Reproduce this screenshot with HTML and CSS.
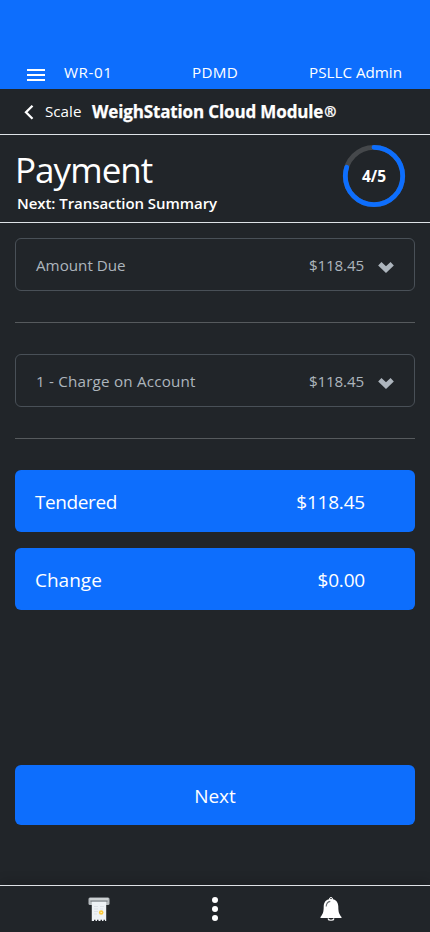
FILE: index.html
```html
<!DOCTYPE html>
<html lang="en">
<head>
<meta charset="utf-8">
<title>Payment</title>
<link rel="stylesheet" href="styles.css">
</head>
<body>
<div class="app">
  <header class="topbar">
    <svg class="menu" width="18" height="12" viewBox="0 0 18 12"><path d="M0 1h18M0 6h18M0 11h18" stroke="#fff" stroke-width="2"/></svg>
    <span class="station">WR-01</span>
    <span class="site">PDMD</span>
    <span class="user">PSLLC Admin</span>
  </header>
  <nav class="crumbs">
    <svg width="10" height="16" viewBox="0 0 10 16"><path d="M8.500 1.800L2 8.300l6.500 6.500" fill="none" stroke="#fff" stroke-width="2.300"/></svg>
    <span class="back">Scale</span>
    <strong class="product">WeighStation Cloud Module<span class="reg">®</span></strong>
  </nav>
  <section class="heading">
    <div>
      <h1>Payment</h1>
      <p class="next-step">Next: Transaction Summary</p>
    </div>
    <div class="progress">
      <svg width="64" height="64" viewBox="0 0 64 64">
        <circle cx="32" cy="32" r="28.700" fill="none" stroke="#45484b" stroke-width="4.800"/>
        <circle cx="32" cy="32" r="28.700" fill="none" stroke="#0d6efd" stroke-width="4.800" stroke-linecap="round" pathLength="100" stroke-dasharray="80 100" transform="rotate(-90 32 32)"/>
      </svg>
      <span class="step">4/5</span>
    </div>
  </section>
  <main>
    <div class="row">
      <span class="l-due">Amount Due</span><span class="amount">$118.45</span>
      <svg width="18" height="12" viewBox="0 0 18 12"><path d="M2.800 2.800L9 8.600l6.200-5.800" fill="none" stroke="#adb5bd" stroke-width="4.800"/></svg>
    </div>
    <hr>
    <div class="row">
      <span class="l-charge">1 - Charge on Account</span><span class="amount">$118.45</span>
      <svg width="18" height="12" viewBox="0 0 18 12"><path d="M2.800 2.800L9 8.600l6.200-5.800" fill="none" stroke="#adb5bd" stroke-width="4.800"/></svg>
    </div>
    <hr>
    <div class="total"><span class="l-tendered">Tendered</span><span class="sum">$118.45</span></div>
    <div class="total"><span>Change</span><span class="sum">$0.00</span></div>
    <button class="next">Next</button>
  </main>
  <footer>
    <svg width="22" height="24" viewBox="0 0 22 24">
      <rect x=".5" y=".5" width="21" height="7.500" rx="1.500" fill="#b5babd"/>
      <path d="M2 2h18" stroke="#e3e7e8"/>
      <path d="M2.500 4.200h17" stroke="#7b8185" stroke-width="1.200"/>
      <path d="M3.800 4.800h14.400V24H17v-1.200h-1.500V24H14v-1.200h-1.500V24h-2v-1.200H9V24H7.500v-1.200H6V24H3.800z" fill="#eef2f5"/>
      <path d="M6 9.500h4M12 9.500h4M6 12h4M12 12h3M6 14.500h4M6 17h3" stroke="#dce1e6"/>
      <circle cx="13.200" cy="15.500" r="2.300" fill="#fbc93d"/>
      <path d="M12.500 15.500h1.500" stroke="#fff0a8"/>
    </svg>
    <svg width="6" height="24" viewBox="0 0 6 24" fill="#fff"><circle cx="3" cy="3" r="3"/><circle cx="3" cy="12" r="3"/><circle cx="3" cy="21" r="3"/></svg>
    <svg width="22" height="24" viewBox="0 0 22 24">
      <circle cx="11" cy="2" r="1.500" fill="none" stroke="#fff"/>
      <path d="M11 2c-4.600 0-7.300 3-7.300 7.500 0 5.500-.7 7.500-3.200 10.500v1h21v-1c-2.500-3-3.200-5-3.200-10.500C18.300 5 15.600 2 11 2z" fill="#fff"/>
      <path d="M6.200 9.500c.1-2.900 1.500-4.700 4.100-5.100" fill="none" stroke="#6b7074" stroke-width="1.100"/>
      <path d="M8 21.500c.5 2.300 5.500 2.300 6 0" fill="none" stroke="#fff" stroke-width="1.200"/>
    </svg>
  </footer>
</div>
</body>
</html>
```
FILE: styles.css
```css
* { box-sizing: border-box; }
body {
  margin: 0;
  background: #212529;
  color: #fff;
  font: 15.2px/24px "Open Sans", "Noto Sans", sans-serif;
}
.app { height: 932px; display: flex; flex-direction: column; overflow: hidden; }
svg { display: block; flex: none; }
span, h1, p { white-space: nowrap; }

.topbar {
  height: 89px;
  padding: 0 28px 5px 27px;
  background: #0d6efd;
  display: grid;
  grid-template-columns: 37px 128px 1fr auto;
  align-items: end;
}
.menu { margin-bottom: 3px; }
.station { letter-spacing: .55px; }
.site { letter-spacing: .3px; }

.crumbs {
  height: 46px;
  padding-left: 24px;
  border-bottom: 1px solid #dee2e6;
  display: flex;
  align-items: center;
}
.back { margin: -2px 0 0 11px; width: 47px; }
.product { font-size: 17px; font-weight: 700; letter-spacing: -.14px; -webkit-text-stroke: .25px #fff; }
.reg { margin-left: 1px; font-size: 14.5px; font-weight: 700; vertical-align: 1px; }

.heading {
  height: 88px;
  padding: 9px 24px 0 15px;
  border-bottom: 1px solid #dee2e6;
  display: flex;
  justify-content: space-between;
}
h1 { margin: 4px 0 0; font-size: 35px; line-height: 44px; font-weight: 400; letter-spacing: -.95px; }
.next-step { margin: -1px 0 0 2px; font-size: 15px; line-height: 24px; font-weight: 600; letter-spacing: -.06px; }
.progress { display: grid; place-items: center; height: 64px; }
.progress > * { grid-area: 1 / 1; }
.step { font-size: 15.5px; font-weight: 700; }

main { flex: 1; padding: 15px 15px 0; display: flex; flex-direction: column; }
.row {
  height: 53px;
  border: 1px solid #495057;
  border-radius: 6px;
  padding: 0 19px 0 20px;
  display: flex;
  align-items: center;
  color: #adb5bd;
}
.l-charge { letter-spacing: .2px; }
.amount { margin-left: auto; margin-right: 13px; letter-spacing: -.15px; }
.row svg { margin-top: 4px; }
hr { width: 100%; height: 1px; border: 0; margin: 31px 0; background: #565a5d; flex: none; }
.total {
  height: 62px;
  padding: 2px 50px 0 20px;
  margin-bottom: 16px;
  border-radius: 6px;
  background: #0d6efd;
  display: flex;
  align-items: center;
  justify-content: space-between;
  font-size: 19px;
}
.l-tendered { letter-spacing: -.4px; }
.sum { letter-spacing: -.2px; }
.next {
  height: 60px;
  margin: auto 0 60px;
  padding: 2px 0 0;
  border: 0;
  border-radius: 6px;
  background: #0d6efd;
  color: #fff;
  font: 19px/24px "Open Sans", "Noto Sans", sans-serif;
}
footer {
  height: 47px;
  border-top: 1px solid #dee2e6;
  box-shadow: 0 -4px 10px rgba(0, 0, 0, .15);
  padding: 0 88px;
  display: flex;
  align-items: center;
  justify-content: space-between;
}
```
